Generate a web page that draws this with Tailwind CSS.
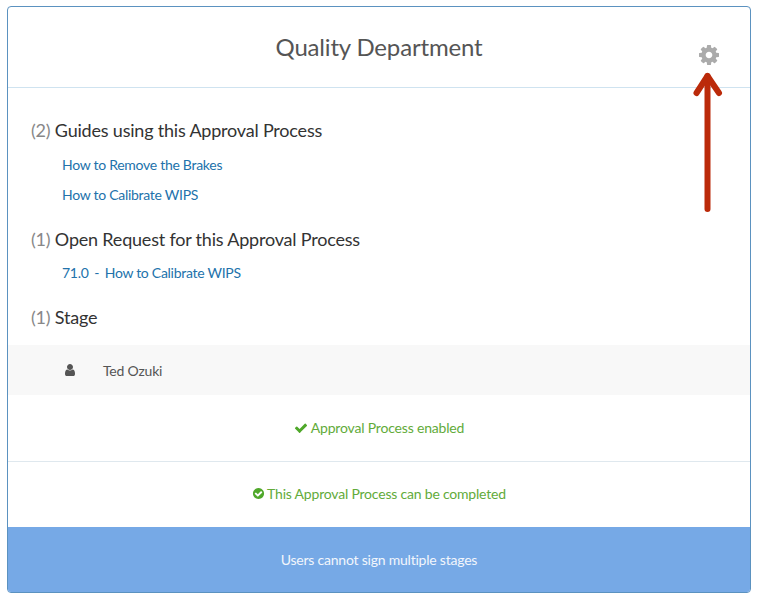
<!doctype html>
<html>
<head>
<meta charset="utf-8">
<script src="https://cdn.jsdelivr.net/npm/@tailwindcss/browser@4"></script>
</head>
<body class="bg-white font-['Lato',sans-serif]">
<div class="relative w-[759px] h-[600px] pt-[6px] px-[7px]">
  <div class="relative w-[744px] h-[587px] border border-[#5b92c0] rounded-[4px] overflow-hidden flex flex-col bg-white">
    <header class="relative h-[81px] shrink-0 border-b border-[#cfe3f0] flex items-center justify-center pb-[1px]">
      <h1 class="text-[24px] leading-[30px] text-[#555555] tracking-[-0.17px]">Quality Department</h1>
    </header>
    <section class="h-[257px] shrink-0 pt-[29px] pl-[23px]">
      <h2 class="text-[18px] leading-[26px] text-[#333333] tracking-[-0.2px]"><span class="text-[#888888]">(2)</span> Guides using this Approval Process</h2>
      <ul class="pl-[31px] pt-[12px] text-[14px] leading-[20px] text-[#2272ab] tracking-[-0.28px]">
        <li>How to Remove the Brakes</li>
        <li class="mt-[10px]">How to Calibrate WIPS</li>
      </ul>
      <h2 class="mt-[21px] text-[18px] leading-[26px] text-[#333333] tracking-[-0.2px]"><span class="text-[#888888]">(1)</span> Open Request for this Approval Process</h2>
      <p class="pl-[31px] pt-[11px] text-[14px] leading-[20px] text-[#2272ab] whitespace-pre tracking-[-0.28px]"><span class="[word-spacing:-0.5px]">71.0  -  </span>How to Calibrate WIPS</p>
      <h2 class="mt-[21px] text-[18px] leading-[26px] text-[#333333] tracking-[-0.2px]"><span class="text-[#888888]">(1)</span> Stage</h2>
    </section>
    <div class="h-[50px] shrink-0 bg-[#f8f8f8] flex items-center pl-[55px] text-[14px] text-[#555555] tracking-[-0.2px]">
      <svg class="w-[14px] h-[14px] mb-[1px]" viewBox="0 0 1792 1792" fill="#555555"><path d="M1536 1399q0 109-62.5 187t-150.500 78h-854q-88 0-150.500-78t-62.500-187q0-85 8.500-160.500t31.500-152 58.500-131 94-89 134.500-34.500q131 128 313 128t313-128q76 0 134.500 34.500t94 89 58.500 131 31.500 152 8.500 160.500zm-256-887q0 159-112.500 271.500t-271.500 112.500-271.500-112.500-112.500-271.500 112.500-271.500 271.500-112.500 271.500 112.500 112.500 271.500z"/></svg>
      <span class="ml-[26px]">Ted Ozuki</span>
    </div>
    <div class="h-[67px] shrink-0 border-b border-[#dfe8ee] flex items-center justify-center gap-[3px] pb-[1px] text-[14px] text-[#62ab3a] tracking-[-0.18px]">
      <svg class="w-[14px] h-[14px]" viewBox="0 0 1792 1792" fill="#4fa82a"><path d="M1671 566q0 40-28 68l-724 724-136 136q-28 28-68 28t-68-28l-136-136-362-362q-28-28-28-68t28-68l136-136q28-28 68-28t68 28l294 295 656-657q28-28 68-28t68 28l136 136q28 28 28 68z"/></svg>
      <span>Approval Process enabled</span>
    </div>
    <div class="h-[65px] shrink-0 flex items-center justify-center gap-[2px] pb-[2px] text-[14px] text-[#62ab3a] tracking-[-0.2px]">
      <svg class="w-[13px] h-[13px]" viewBox="0 0 1792 1792" fill="#4fa82a"><path d="M1412 734q0-28-18-46l-91-90q-19-19-45-19t-45 19l-408 407-226-226q-19-19-45-19t-45 19l-91 90q-18 18-18 46 0 27 18 45l362 362q19 19 45 19 27 0 46-19l543-543q18-18 18-45zm252 162q0 209-103 385.500t-279.500 279.500-385.500 103-385.500-103-279.500-279.500-103-385.500 103-385.500 279.500-279.500 385.500-103 385.500 103 279.500 279.500 103 385.500z"/></svg>
      <span>This Approval Process can be completed</span>
    </div>
    <footer class="flex-1 bg-[#76a9e6] flex items-center justify-center text-[14px] text-[#f2f6fc] tracking-[-0.22px]">Users cannot sign multiple stages</footer>
  </div>
  <svg class="absolute left-[699px] top-[45px] w-[20px] h-[20px]" viewBox="0 0 1536 1536" fill="#ababab"><path d="M1024 768q0-106-75-181t-181-75-181 75-75 181 75 181 181 75 181-75 75-181zm512-109v222q0 12-8 23t-20 13l-185 28q-19 54-39 91 35 50 107 138 10 12 10 25t-9 23q-27 37-99 108t-94 71q-12 0-26-9l-138-108q-44 23-91 38-16 136-29 186-7 28-36 28h-222q-14 0-24.500-8.500t-11.500-21.500l-28-184q-49-16-90-37l-141 107q-10 9-25 9-14 0-25-11-126-114-165-168-7-10-7-23 0-12 8-23 15-21 51-66.500t54-70.500q-27-50-41-99l-183-27q-13-2-21-12.500t-8-23.500v-222q0-12 8-23t19-13l186-28q14-46 39-92-40-57-107-138-10-12-10-24 0-10 9-23 26-36 98.500-107.500t94.500-71.500q13 0 26 10l138 107q44-23 91-38 16-136 29-186 7-28 36-28h222q14 0 24.500 8.500t11.500 21.500l28 184q49 16 90 37l142-107q9-9 24-9 13 0 25 10 129 119 165 170 7 8 7 22 0 12-8 23-15 21-51 66.500t-54 70.500q26 50 41 98l183 28q13 2 21 12.500t8 23.500z"/></svg>
  <svg class="absolute left-[690px] top-[70px] w-[36px] h-[145px]" viewBox="0 0 36 145" fill="none" stroke="#bb2a0a" stroke-width="6" stroke-linecap="round" stroke-linejoin="round"><path d="M17.500 139 V6"/><path d="M6.500 23 L17.500 6 L29 23"/></svg>
</div>
</body>
</html>
